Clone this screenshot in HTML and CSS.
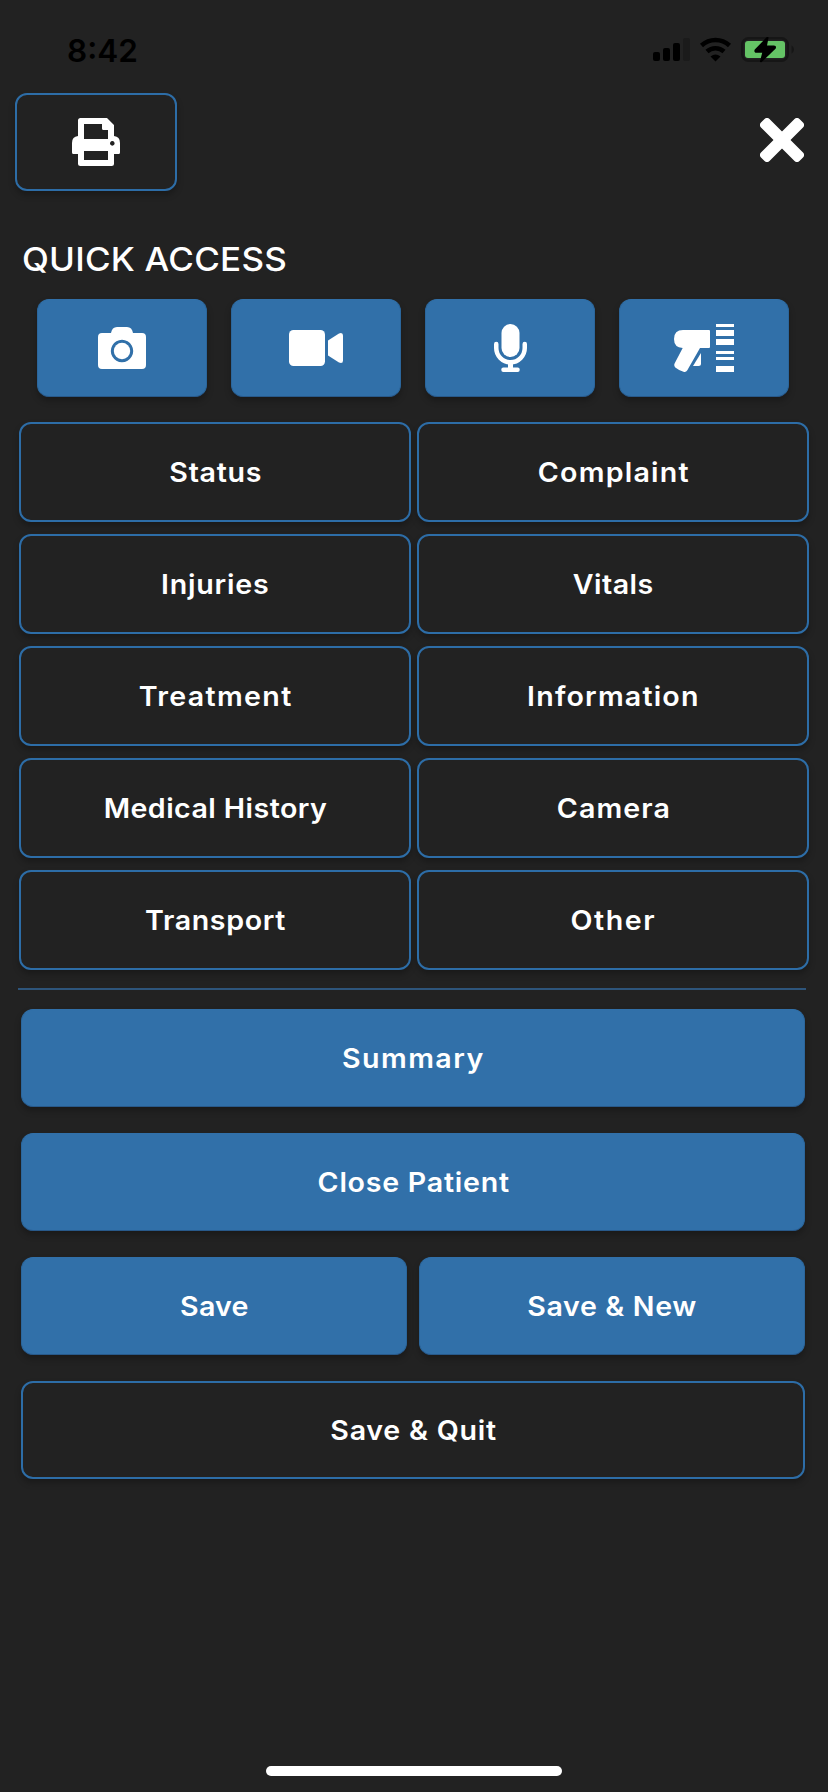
FILE: index.html
```html
<!DOCTYPE html>
<html lang="en">
<head>
<meta charset="utf-8">
<title>Patient Menu</title>
<link rel="stylesheet" href="styles.css">
</head>
<body>
<div class="screen">
  <div class="statusbar">
    <span class="time">8:42</span>
    <svg class="status-icons" viewBox="0 0 142 26" width="142" height="26">
      <rect x="0" y="15" width="7" height="9" rx="2"/>
      <rect x="10" y="11" width="7" height="13" rx="2"/>
      <rect x="20" y="6" width="7" height="18" rx="2"/>
      <rect x="30" y="1" width="7" height="23" rx="2" fill="#1b1b1b"/>
      <g fill="none" stroke="#000" stroke-width="4.500">
        <path d="M48.500 8.500A20.500 20.500 0 0 1 76.500 8.500"/>
        <path d="M54 14.500A12.500 12.500 0 0 1 71 14.500"/>
      </g>
      <path d="M57.500 19.500Q62.500 15.500 67.500 19.500L62.500 24.500Z"/>
      <rect x="89.200" y="1.200" width="45.600" height="22.600" rx="6.500" fill="none" stroke="#161616" stroke-width="2.400"/>
      <path d="M138.500 8.500Q141 9.500 141 12.500T138.500 16.500Z" fill="#161616"/>
      <rect x="92" y="4" width="40" height="17" rx="3" fill="#65c466"/>
      <path d="M114.500 .8L102.500 13.200Q102 14.800 103.500 14.800H110.500L108 24.300L121.800 11Q122.500 9.500 120.800 9.500H112.800Z" stroke="#000" stroke-width="2" stroke-linejoin="round"/>
    </svg>
  </div>

  <div class="topbar">
    <button class="btn outline print" aria-label="Print">
      <svg viewBox="0 0 48 48" width="48" height="48" fill="#fff">
        <path fill-rule="evenodd" d="M8.500 0H35L42 7V18Q48 18.500 48 25V34.500Q48 36 46.500 36H42V45.500Q42 48 39.500 48H8.500Q6 48 6 45.500V36H1.500Q0 36 0 34.500V25Q0 18.500 6 18V2.500Q6 0 8.500 0ZM12 6V21H36V12H31.500Q30 12 30 10.500V6ZM12 33V42H36V33ZM40.300 23.100a2.300 2.300 0 1 0 .01 0Z"/>
      </svg>
    </button>
    <svg class="close" viewBox="-22 -22 44 44" width="44" height="44" fill="#fff">
      <rect x="-27.200" y="-6" width="54.400" height="12" rx="3.500" transform="rotate(45)"/>
      <rect x="-27.200" y="-6" width="54.400" height="12" rx="3.500" transform="rotate(-45)"/>
    </svg>
  </div>

  <h1 class="title"><span class="label t-quick">QUICK ACCESS</span></h1>

  <div class="quick">
    <button class="btn solid" aria-label="Photo">
      <svg viewBox="0 0 48 42" width="48" height="42" fill="#fff">
        <path fill-rule="evenodd" d="M4 6H13Q14 0 19 0H29Q34 0 35 6H44Q48 6 48 10V38Q48 42 44 42H4Q0 42 0 38V10Q0 6 4 6ZM24 12.800a11.200 11.200 0 1 0 .01 0Z"/>
        <circle cx="24" cy="24" r="8.200"/>
      </svg>
    </button>
    <button class="btn solid" aria-label="Video">
      <svg viewBox="0 0 54 36" width="54" height="36" fill="#fff">
        <rect width="36" height="36" rx="4.500"/>
        <path d="M39 10.500L50 3.400Q54 2 54 5.500V30.500Q54 34 50 32.600L39 25.500Z"/>
      </svg>
    </button>
    <button class="btn solid" aria-label="Audio">
      <svg viewBox="0 0 33 48" width="33" height="48" fill="#fff">
        <rect x="7.500" y="0" width="18" height="33" rx="9"/>
        <path d="M2.250 20V24a14.250 14.250 0 0 0 28.500 0V20" fill="none" stroke="#fff" stroke-width="4.500" stroke-linecap="round"/>
        <rect x="14" y="38" width="5" height="7"/>
        <rect x="7.300" y="43.500" width="18.400" height="4.500" rx="2"/>
      </svg>
    </button>
    <button class="btn solid" aria-label="Scan">
      <svg viewBox="0 0 60 48" width="60" height="48" fill="#fff">
        <path d="M9 6H35Q36 6 36 7V23Q36 24 35 24H26L13.300 46.200Q12 48.500 9.500 47.700Q5 46.500 1.300 43.500Q-.500 41.500 .700 39.200L8.700 24Q0 23.500 0 15Q0 6 9 6Z"/>
        <path d="M27 29V39.500Q27 42 24.500 42H19Z"/>
        <path d="M42 0H60V3H42ZM42 6H60V12H42ZM42 15H60V21H42ZM42 27H60V30H42ZM42 33H60V36H42ZM42 42H60V48H42Z"/>
      </svg>
    </button>
  </div>

  <div class="sections">
    <button class="btn outline"><span class="label t-status">Status</span></button>
    <button class="btn outline"><span class="label t-complaint">Complaint</span></button>
    <button class="btn outline"><span class="label t-injuries">Injuries</span></button>
    <button class="btn outline"><span class="label t-vitals">Vitals</span></button>
    <button class="btn outline"><span class="label t-treatment">Treatment</span></button>
    <button class="btn outline"><span class="label t-information">Information</span></button>
    <button class="btn outline"><span class="label t-history">Medical History</span></button>
    <button class="btn outline"><span class="label t-camera">Camera</span></button>
    <button class="btn outline"><span class="label t-transport">Transport</span></button>
    <button class="btn outline"><span class="label t-other">Other</span></button>
  </div>

  <div class="divider"></div>

  <div class="actions">
    <button class="btn solid wide"><span class="label t-summary">Summary</span></button>
    <button class="btn solid wide"><span class="label t-close">Close Patient</span></button>
    <button class="btn solid"><span class="label t-save">Save</span></button>
    <button class="btn solid"><span class="label t-new">Save &amp; New</span></button>
    <button class="btn outline wide"><span class="label t-quit">Save &amp; Quit</span></button>
  </div>

  <div class="home"></div>
</div>
</body>
</html>
```
FILE: styles.css
```css
* { box-sizing: border-box; }

body {
  margin: 0;
  background: #222;
  color: #fff;
  font-family: Inter, sans-serif;
}

.screen {
  width: 828px;
  height: 1792px;
  display: flex;
  flex-direction: column;
  overflow: hidden;
}

.statusbar {
  height: 93px;
  padding: 0 33px 0 67px;
  display: flex;
  justify-content: space-between;
  align-items: flex-start;
}

.time {
  margin-top: 31px;
  color: #000;
  font: 600 31.500px/39px Inter, sans-serif;
}

.status-icons { margin-top: 37px; }

.topbar {
  height: 98px;
  padding: 0 24px 0 15px;
  display: flex;
  justify-content: space-between;
}

.close { margin-top: 25px; }

.btn {
  height: 98px;
  padding: 0;
  display: flex;
  align-items: center;
  justify-content: center;
  border-radius: 12px;
  color: #fff;
  font: 600 27px/34px Inter, sans-serif;
  box-shadow: 0 4px 6px rgba(0, 0, 0, .26);
}

.outline {
  background: #222;
  border: 2px solid #2d6da7;
}

.solid {
  background: #3170a9;
  border: 1px solid #2b669c;
  border-top-color: #3170a9;
  border-bottom-color: #28598a;
}

.print { width: 162px; }

.title {
  margin: 48px 0 0 22px;
  height: 60px;
  font: 500 33px/40px Inter, sans-serif;
}

/* Widened lettering; --ls is the tracking of each label. */
.label {
  display: inline-block;
  letter-spacing: var(--ls);
  margin-right: calc(var(--ls) * -1);
  transform: scaleX(1.06);
}

.btn .label { padding-top: 2px; }

.title .label { transform-origin: left; }

.t-quick { --ls: .2px; }
.t-status { --ls: .65px; }
.t-complaint { --ls: 1.15px; }
.t-injuries { --ls: .75px; }
.t-vitals { --ls: .45px; }
.t-treatment { --ls: 1.25px; }
.t-information { --ls: 1.1px; }
.t-history { --ls: .4px; }
.t-camera { --ls: 1px; }
.t-transport { --ls: .6px; }
.t-other { --ls: 1.45px; }
.t-summary { --ls: 1.35px; }
.t-close { --ls: .7px; }
.t-save { --ls: .2px; }
.t-new { --ls: .6px; }
.t-quit { --ls: .7px; }

.quick {
  padding: 0 39px 0 37px;
  display: grid;
  grid-template-columns: repeat(4, 170px);
  gap: 24px;
}

.sections {
  margin-top: 25px;
  padding-left: 19px;
  display: grid;
  grid-template-columns: 392px 392px;
  gap: 12px 6px;
}

.sections .btn { height: 100px; }

.divider {
  width: 788px;
  height: 2px;
  margin: 18px 0 19px 18px;
  background: #2e557b;
}

.actions {
  padding: 0 23px 0 21px;
  display: grid;
  grid-template-columns: 1fr 1fr;
  gap: 26px 12px;
}

.wide { grid-column: span 2; }

.home {
  width: 296px;
  height: 10px;
  margin: auto auto 16px;
  border-radius: 5px;
  background: #fff;
}
```
